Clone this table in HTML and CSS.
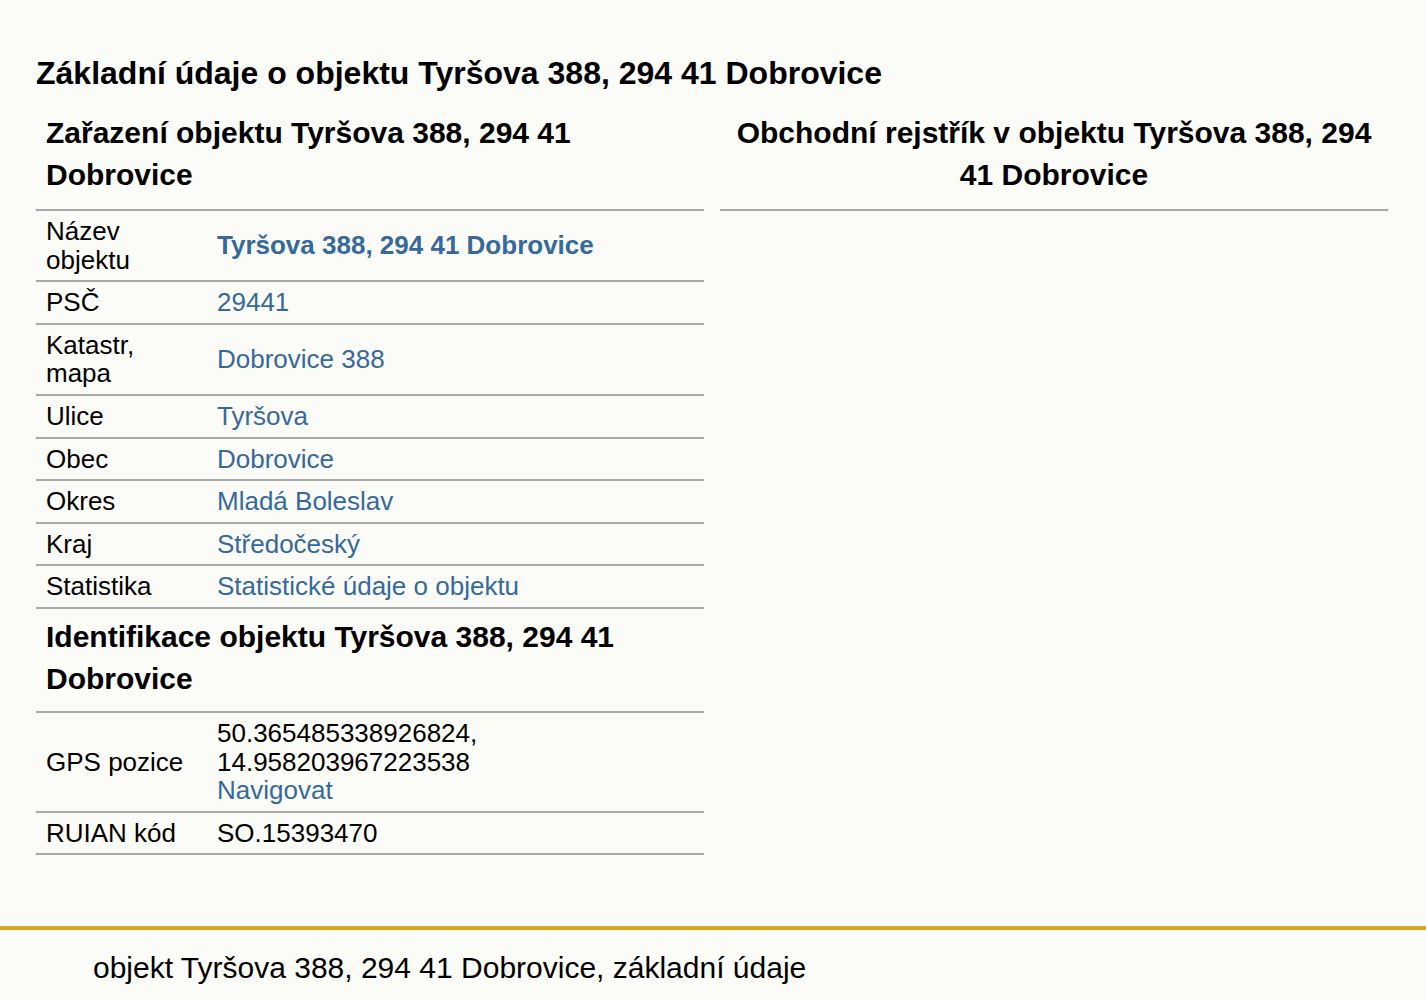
FILE: index.html
```html
<!DOCTYPE html>
<html lang="cs">
<head>
    <meta charset="UTF-8">
    <meta name="viewport" content="width=device-width, initial-scale=1.0">
    <title>Tyršova 388, 294 41 Dobrovice - základní údaje</title>
    <link rel="stylesheet" href="styles.css">
</head>
<body>

    <main class="page">
        <h1>Základní údaje o objektu Tyršova 388, 294 41 Dobrovice</h1>

        <div class="columns">
            <!-- Left column: classification + identification -->
            <section class="column">
                <h2>Zařazení objektu Tyršova 388, 294 41 Dobrovice</h2>
                <table class="info">
                    <tr>
                        <th>Název objektu</th>
                        <td><a href="#" class="strong">Tyršova 388, 294 41 Dobrovice</a></td>
                    </tr>
                    <tr>
                        <th>PSČ</th>
                        <td><a href="#">29441</a></td>
                    </tr>
                    <tr>
                        <th>Katastr, mapa</th>
                        <td><a href="#">Dobrovice 388</a></td>
                    </tr>
                    <tr>
                        <th>Ulice</th>
                        <td><a href="#">Tyršova</a></td>
                    </tr>
                    <tr>
                        <th>Obec</th>
                        <td><a href="#">Dobrovice</a></td>
                    </tr>
                    <tr>
                        <th>Okres</th>
                        <td><a href="#">Mladá Boleslav</a></td>
                    </tr>
                    <tr>
                        <th>Kraj</th>
                        <td><a href="#">Středočeský</a></td>
                    </tr>
                    <tr>
                        <th>Statistika</th>
                        <td><a href="#">Statistické údaje o objektu</a></td>
                    </tr>
                </table>

                <h2>Identifikace objektu Tyršova 388, 294 41 Dobrovice</h2>
                <table class="info">
                    <tr>
                        <th>GPS pozice</th>
                        <td>50.365485338926824,<br>14.958203967223538<br><a href="#">Navigovat</a></td>
                    </tr>
                    <tr>
                        <th>RUIAN kód</th>
                        <td>SO.15393470</td>
                    </tr>
                </table>
            </section>

            <!-- Right column: business register -->
            <section class="column">
                <h2 class="centered">Obchodní rejstřík v objektu Tyršova 388, 294 41 Dobrovice</h2>
            </section>
        </div>
    </main>

    <footer class="footer">
        objekt Tyršova 388, 294 41 Dobrovice, základní údaje
    </footer>

</body>
</html>
```

FILE: styles.css
```css
/* Base page */
html, body {
    margin: 0;
    background-color: #fbfbf7;
    color: #000;
    font-family: "Liberation Sans", Arial, sans-serif;
}

.page {
    padding: 0 38px 0 36px;
    margin-bottom: 71px;
}

h1 {
    font-size: 32px;
    line-height: 36px;
    font-weight: bold;
    margin: 55px 0 14px;
}

/* Two equal columns */
.columns {
    display: grid;
    grid-template-columns: 1fr 1fr;
    gap: 16px;
    align-items: start;
}

h2 {
    font-size: 30px;
    line-height: 42px;
    font-weight: bold;
    margin: 0;
    padding: 7px 10px 13px;
    border-bottom: 2px solid #aaa;
}

/* Heading that follows a table sits a bit tighter */
.info + h2 {
    padding-bottom: 11px;
}

h2.centered {
    text-align: center;
}

/* Info tables */
.info {
    width: 100%;
    border-collapse: collapse;
    font-size: 26px;
    line-height: 1.1;
}

.info tr {
    border-bottom: 2px solid #aaa;
}

.info th,
.info td {
    padding: 6px 10px;
    text-align: left;
    vertical-align: middle;
}

.info th {
    width: 151px;
    font-weight: normal;
}

.info a {
    color: #36699c;
    text-decoration: none;
}

.info a.strong {
    font-weight: bold;
}

/* Footer with gold rule */
.footer {
    border-top: 4px solid #daa520;
    padding: 21px 93px 30px;
    font-size: 30px;
    line-height: 34px;
}
```
